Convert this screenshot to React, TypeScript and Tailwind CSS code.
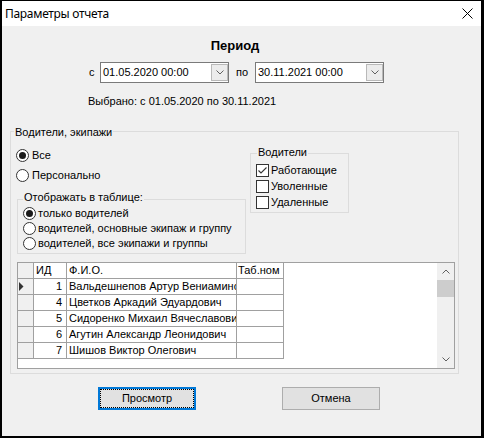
import React from 'react';

const rows = [
  { id: 1, name: 'Вальдешнепов Артур Вениаминович' },
  { id: 4, name: 'Цветков Аркадий Эдуардович' },
  { id: 5, name: 'Сидоренко Михаил Вячеславович' },
  { id: 6, name: 'Агутин Александр Леонидович' },
  { id: 7, name: 'Шишов Виктор Олегович' },
];

const Radio = ({ checked = false, label, gap = 'gap-[3px]', h = 'h-[16px]' }: any) => (
  <div className={`flex items-center ${gap} ${h}`}>
    <span className="w-[13px] h-[13px] rounded-full border border-[#333333] bg-white flex items-center justify-center shrink-0">
      {checked && <span className="w-[7px] h-[7px] rounded-full bg-[#1a1a1a]" />}
    </span>
    <span className="whitespace-nowrap">{label}</span>
  </div>
);

const Check = ({ checked = false, label }: any) => (
  <div className="flex items-center gap-[2px] h-[16px]">
    <span className="w-[13px] h-[13px] border border-[#333333] bg-white flex items-center justify-center shrink-0">
      {checked && (
        <svg width="11" height="11" viewBox="0 0 11 11">
          <path d="M1.5 5.5 L4 8 L9.5 2.5" stroke="#333333" strokeWidth="1.1" fill="none" />
        </svg>
      )}
    </span>
    <span className="whitespace-nowrap">{label}</span>
  </div>
);

const Chevron = ({ up = false }: { up?: boolean }) => (
  <svg width="8" height="5" viewBox="0 0 8 5">
    <path d={up ? 'M0.5 4.5 L4 1 L7.5 4.5' : 'M0.5 0.5 L4 4 L7.5 0.5'} stroke="#606060" strokeWidth="1" fill="none" />
  </svg>
);

const DateBox = ({ value }: { value: string }) => (
  <div className="w-[129px] h-[21px] border border-[#7a7a7a] bg-white flex pl-[2px]">
    <span className="self-center whitespace-nowrap">{value}</span>
    <div className="ml-auto mt-[1px] w-[17px] h-[17px] border border-[#b9b9b9] bg-[#ececec] flex items-center justify-center">
      <Chevron />
    </div>
  </div>
);

export default function App() {
  return (
    <div className="w-[484px] h-[438px] bg-black pt-px pl-[2px] pr-[3px] pb-[2px] font-['Liberation_Sans',Arial,sans-serif] text-[11px] text-black">
      <div className="h-full bg-[#f0f0f0] flex flex-col">
        {/* title bar */}
        <div className="h-[25px] bg-white flex items-center justify-between pl-[3px] pr-[8px] shrink-0">
          <span className="font-['Noto_Sans',sans-serif] text-[12px] leading-[16px] tracking-[-0.3px]">Параметры отчета</span>
          <svg width="11" height="11" viewBox="0 0 11 11">
            <path d="M0.5 0.5 L10.5 10.5 M10.5 0.5 L0.5 10.5" stroke="#000" strokeWidth="1" />
          </svg>
        </div>

        <div className="mt-[12px] pr-[13px] text-center font-bold text-[13px] leading-[16px]">Период</div>

        <div className="mt-[8px] ml-[87px] flex items-center h-[21px]">
          <span className="w-[11px]">с</span>
          <DateBox value="01.05.2020 00:00" />
          <span className="w-[26px] pl-[7px]">по</span>
          <DateBox value="30.11.2021 00:00" />
        </div>

        <div className="mt-[10px] ml-[86px] leading-[16px]">Выбрано: с 01.05.2020 по 30.11.2021</div>

        {/* Водители, экипажи */}
        <div className="relative mt-[22px] ml-[8px] w-[449px] border border-[#dcdcdc] pb-[4px]">
          <span className="absolute -top-[7px] left-[3px] px-px bg-[#f0f0f0] leading-[14px]">Водители, экипажи</span>

          <div className="flex">
            <div className="w-[235px] pt-[15px]">
              <div className="pl-[5px]">
                <Radio checked label="Все" />
                <div className="mt-[4px]">
                  <Radio label="Персонально" />
                </div>
              </div>
              <div className="relative mt-[16px] ml-[6px] w-[229px] border border-[#dcdcdc] pt-[6px] pb-[2px] pl-[5px]">
                <span className="absolute -top-[10px] left-[5px] px-px bg-[#f0f0f0] leading-[14px]">Отображать в таблице:</span>
                <Radio checked label="только водителей" gap="gap-[2px]" h="h-[15px]" />
                <Radio label="водителей, основные экипаж и группу" gap="gap-[2px]" h="h-[15px]" />
                <Radio label="водителей, все экипажи и группы" gap="gap-[2px]" h="h-[15px]" />
              </div>
            </div>

            <div className="relative mt-[21px] ml-[4px] w-[99px] h-[60px] border border-[#dcdcdc] pt-[8px] pl-[5px]">
              <span className="absolute -top-[9px] left-[6px] px-px bg-[#f0f0f0] leading-[14px]">Водители</span>
              <Check checked label="Работающие" />
              <Check label="Уволенные" />
              <Check label="Удаленные" />
            </div>
          </div>

          {/* grid */}
          <div className="mt-[8px] ml-[6px] w-[438px] h-[107px] border border-[#a0a0a0] bg-white flex">
            <div className="w-[419px] flex flex-col">
              <div className="flex h-[16px]">
                <div className="w-[16px] border-r border-b border-[#a0a0a0] bg-[#f0f0f0]" />
                <div className="w-[33px] border-r border-b border-[#a0a0a0] pl-[2px] leading-[15px]">ИД</div>
                <div className="w-[170px] border-r border-b border-[#a0a0a0] pl-[2px] leading-[15px]">Ф.И.О.</div>
                <div className="w-[47px] border-r border-b border-[#a0a0a0] pl-[1px] leading-[15px] overflow-hidden whitespace-nowrap">Таб.ном</div>
              </div>
              {rows.map((r, i) => (
                <div key={r.id} className="flex h-[16px]">
                  <div className="w-[16px] border-r border-b border-[#a0a0a0] bg-[#f0f0f0] flex items-center">
                    {i === 0 && (
                      <svg width="5" height="9" viewBox="0 0 5 9" className="ml-px">
                        <path d="M0 0 L4.5 4.5 L0 9 Z" fill="#333333" />
                      </svg>
                    )}
                  </div>
                  <div className="w-[33px] border-r border-b border-[#a0a0a0] text-right pr-[4px] leading-[15px]">{r.id}</div>
                  <div className="w-[170px] border-r border-b border-[#a0a0a0] pl-[2px] leading-[15px] overflow-hidden whitespace-nowrap">{r.name}</div>
                  <div className="w-[47px] border-r border-b border-[#a0a0a0]" />
                </div>
              ))}
            </div>
            <div className="w-[17px] bg-[#f0f0f0] flex flex-col items-center">
              <div className="h-[17px] flex items-center justify-center">
                <Chevron up />
              </div>
              <div className="w-[17px] h-[17px] bg-[#cdcdcd]" />
              <div className="mt-auto h-[17px] flex items-center justify-center">
                <Chevron />
              </div>
            </div>
          </div>
        </div>

        {/* buttons */}
        <div className="mt-[13px] ml-[96px] flex gap-[86px]">
          <div className="relative w-[98px] h-[23px] border-2 border-[#0078d7] bg-[#e1e1e1] flex items-center justify-center">
            <div className="absolute inset-0 border border-dotted border-black" />
            <span>Просмотр</span>
          </div>
          <div className="w-[98px] h-[23px] border border-[#adadad] bg-[#e1e1e1] flex items-center justify-center">
            <span>Отмена</span>
          </div>
        </div>
      </div>
    </div>
  );
}
